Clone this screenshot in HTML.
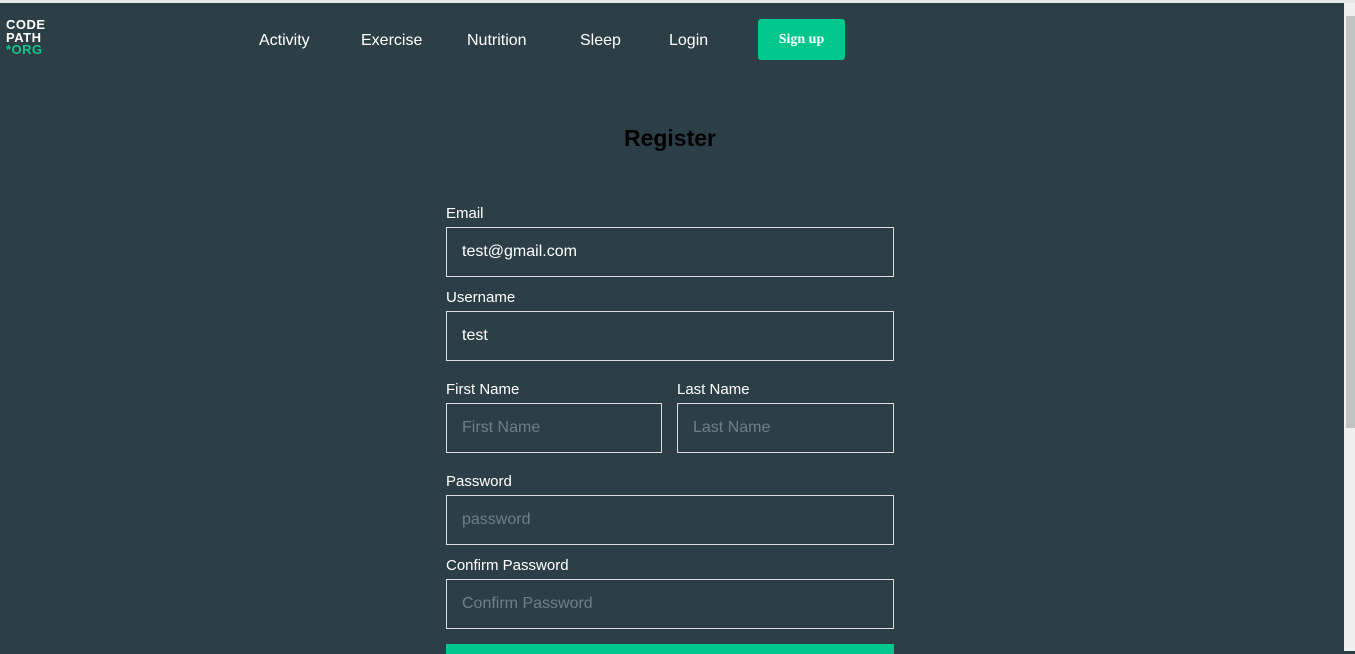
<!DOCTYPE html>
<html><head><meta charset="utf-8"><style>
*{box-sizing:border-box;margin:0;padding:0}
html,body{width:1355px;height:651px;overflow:hidden;background:#2c3e46;font-family:"Liberation Sans",sans-serif}
.topline{position:absolute;left:0;top:0;width:1355px;height:3px;background:#e8e8e8}
.sb{position:absolute;left:1344px;top:3px;width:11px;height:648px;background:#f0f0f0}
.thumb{position:absolute;left:1346px;top:16px;width:9px;height:412px;background:#c1c3c2}
.logo{position:absolute;left:6px;top:19px;font-weight:bold;font-size:13px;line-height:12.5px;color:#fff;letter-spacing:0.5px}
.logo .g{color:#16c48c}
.nav a{position:absolute;top:32px;color:#fff;font-size:16px;text-decoration:none}
.btn{position:absolute;left:758px;top:19px;width:87px;height:41px;background:#00c88d;border-radius:3px;color:#fff;font-weight:bold;font-size:14px;font-family:"Liberation Serif",serif;text-align:center;line-height:41px}
h1{position:absolute;left:0;width:1340px;top:125px;text-align:center;font-size:23px;color:#000}
.l{position:absolute;color:#fff;font-size:15px}
.i{position:absolute;border:1px solid #ddd;height:50px;color:#fff;font-size:16px;padding-left:15px;line-height:48px}
.p{color:#6f7f85}
.sub{position:absolute;left:446px;top:644px;width:448px;height:10px;background:#00c88d}
</style></head><body>
<div class="topline"></div>
<div class="sb"></div><div class="thumb"></div>
<div class="logo">CODE<br>PATH<br><span class="g">*ORG</span></div>
<div class="nav"><a style="left:259px">Activity</a><a style="left:361px">Exercise</a><a style="left:467px">Nutrition</a><a style="left:580px">Sleep</a><a style="left:669px">Login</a></div>
<div class="btn">Sign up</div>
<h1>Register</h1>
<div class="l" style="left:446px;top:205px">Email</div>
<div class="i" style="left:446px;top:227px;width:448px">test@gmail.com</div>
<div class="l" style="left:446px;top:289px">Username</div>
<div class="i" style="left:446px;top:311px;width:448px">test</div>
<div class="l" style="left:446px;top:381px">First Name</div>
<div class="l" style="left:677px;top:381px">Last Name</div>
<div class="i p" style="left:446px;top:403px;width:216px">First Name</div>
<div class="i p" style="left:677px;top:403px;width:217px">Last Name</div>
<div class="l" style="left:446px;top:473px">Password</div>
<div class="i p" style="left:446px;top:495px;width:448px">password</div>
<div class="l" style="left:446px;top:557px">Confirm Password</div>
<div class="i p" style="left:446px;top:579px;width:448px">Confirm Password</div>
<div class="sub"></div>
</body></html>
